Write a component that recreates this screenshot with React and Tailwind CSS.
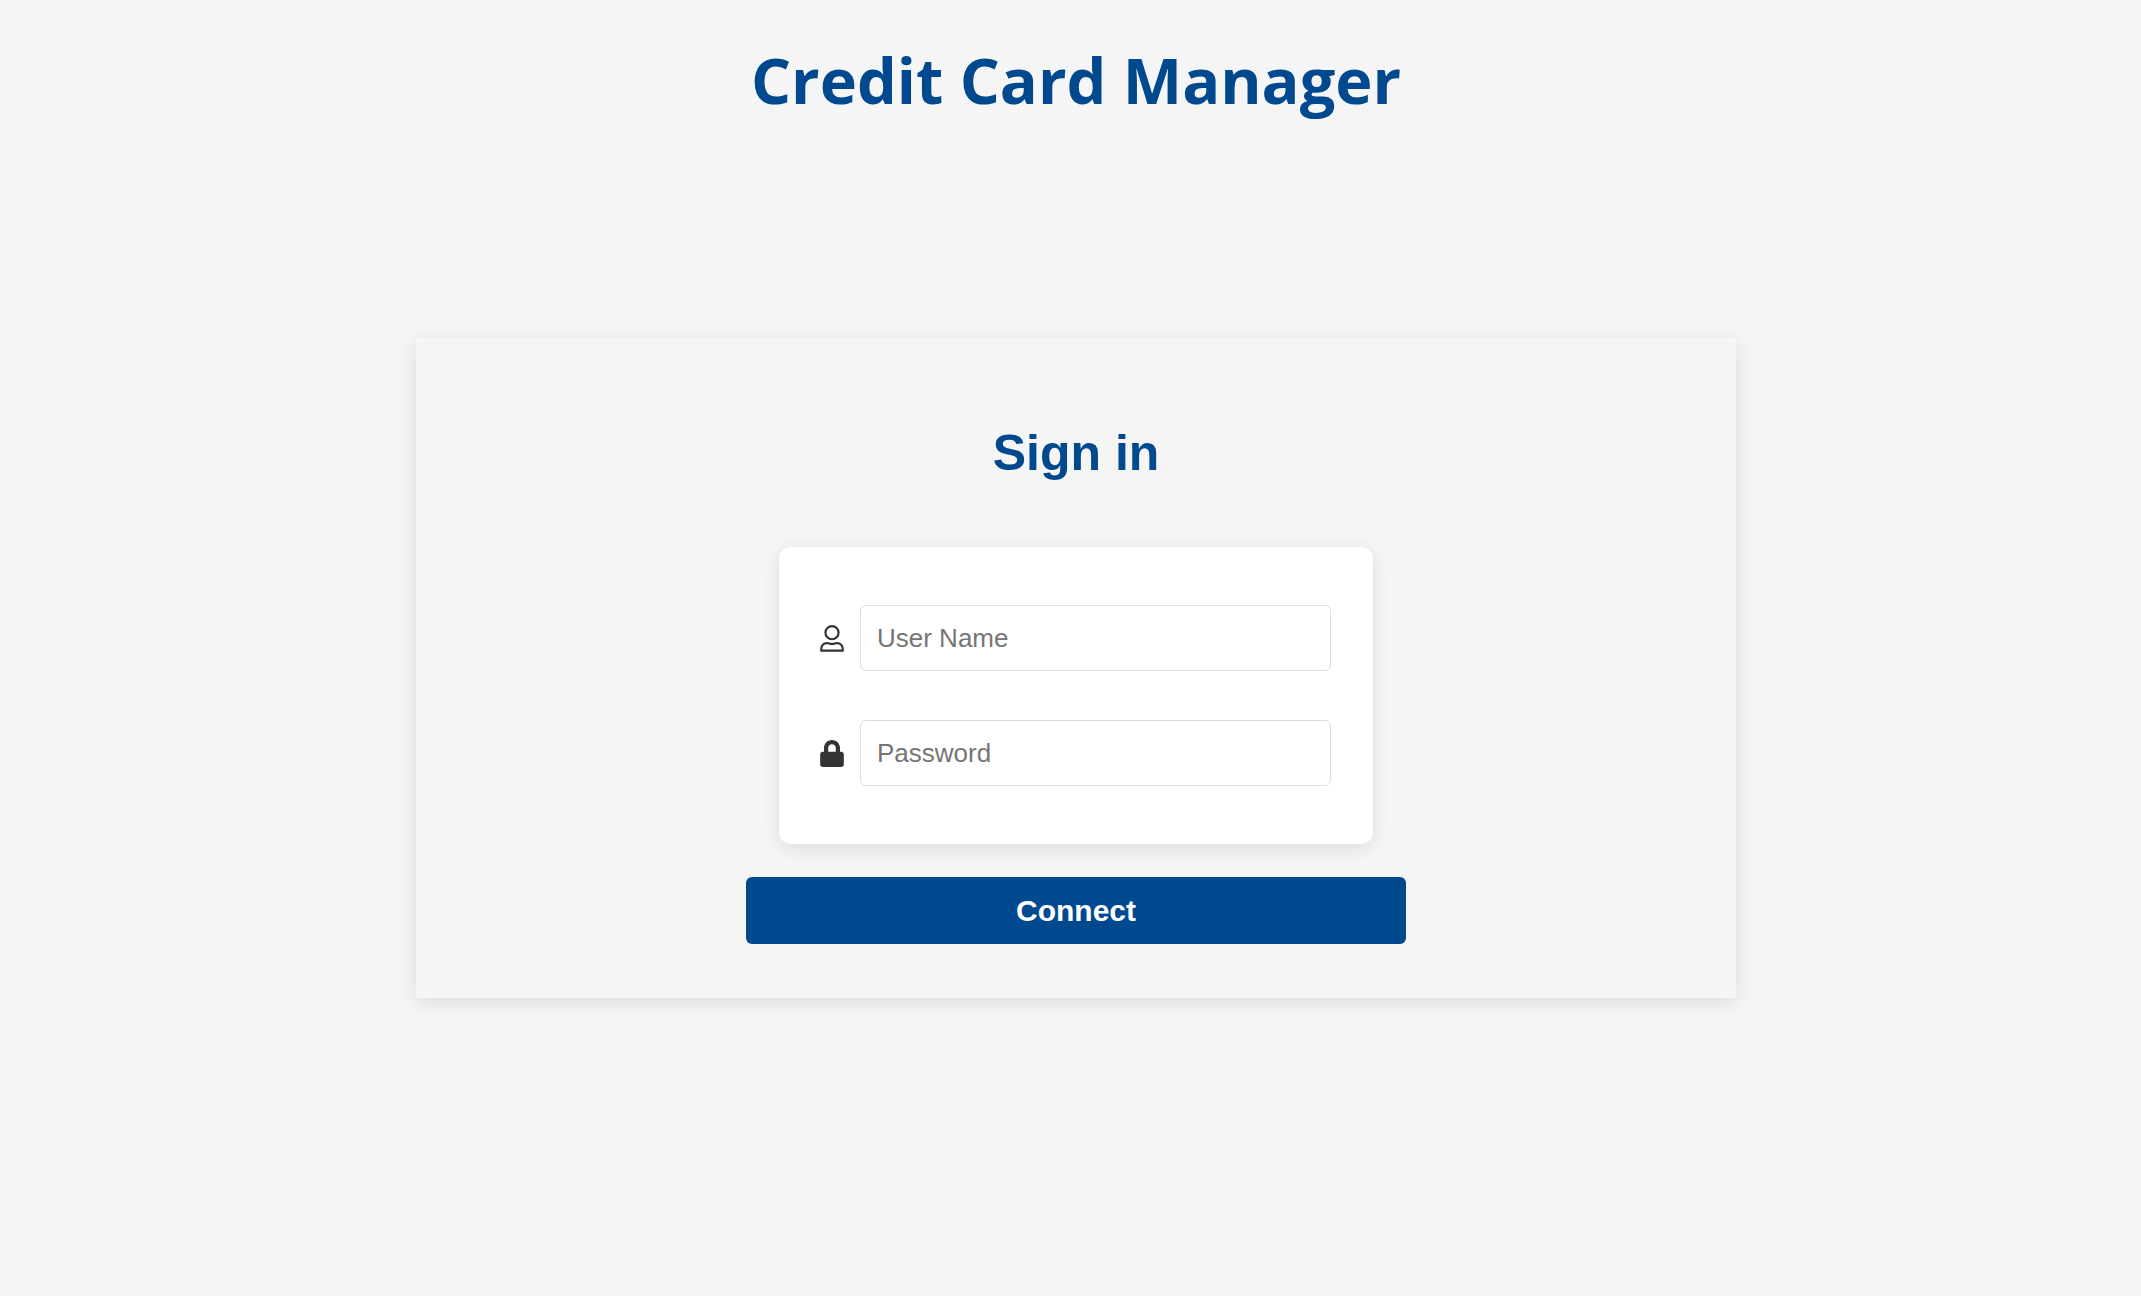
import { FaLock } from "react-icons/fa";

function UserIcon({ className }) {
  return (
    <svg viewBox="0 0 23 26" fill="none" stroke="currentColor" strokeWidth="2.1" className={className} aria-hidden="true">
      <circle cx="11.5" cy="7.4" r="6.3" />
      <path d="M1.2 24.6V22.9A5.3 5.3 0 0 1 6.5 17.4C8.6 17.4 9.2 18.3 11.5 18.3S14.4 17.4 16.5 17.4A5.3 5.3 0 0 1 21.8 22.9V24.6Z" />
    </svg>
  );
}

function Field({ id, label, type, icon: Icon }) {
  return (
    <div className="flex items-center">
      <label htmlFor={id} aria-label={label} className="mr-4 shrink-0">
        <Icon className="h-[27px] w-6 text-[#333333]" />
      </label>
      <input
        id={id}
        type={type}
        placeholder={label}
        className="h-[66px] min-w-0 flex-1 rounded-md border border-[#dddddd] bg-white px-4 text-[26px] text-[#333333] placeholder:text-[#757575]"
      />
    </div>
  );
}

export default function App() {
  return (
    <div className="flex min-h-screen flex-col items-center bg-[#f5f5f5] pl-[11px] font-['Liberation_Sans',Arial,sans-serif]">
      <h1 className="pt-9 text-center font-['Open_Sans','Noto_Sans',sans-serif] text-[63px] leading-[88px] font-bold text-[#00498f]">
        Credit Card Manager
      </h1>
      <main className="mt-[214px] flex w-full max-w-[1320px] flex-col items-center bg-[#f5f5f5] pt-[86px] pb-[54px] shadow-[0_4px_18px_rgba(0,0,0,0.1)]">
        <h2 className="text-[50px] leading-[58px] font-bold text-[#00498f]">Sign in</h2>
        <form className="mt-[65px] flex w-full max-w-[660px] flex-col items-center" onSubmit={(e) => e.preventDefault()}>
          <div className="flex w-9/10 flex-col gap-[49px] rounded-xl bg-white py-[58px] pr-[42px] pl-[41px] shadow-[0_4px_18px_rgba(0,0,0,0.1)]">
            <Field id="username" label="User Name" type="text" icon={UserIcon} />
            <Field id="password" label="Password" type="password" icon={FaLock} />
          </div>
          <button type="submit" className="mt-[33px] h-[67px] w-full rounded-md bg-[#00498f] text-[30px] font-bold text-white">
            Connect
          </button>
        </form>
      </main>
    </div>
  );
}
